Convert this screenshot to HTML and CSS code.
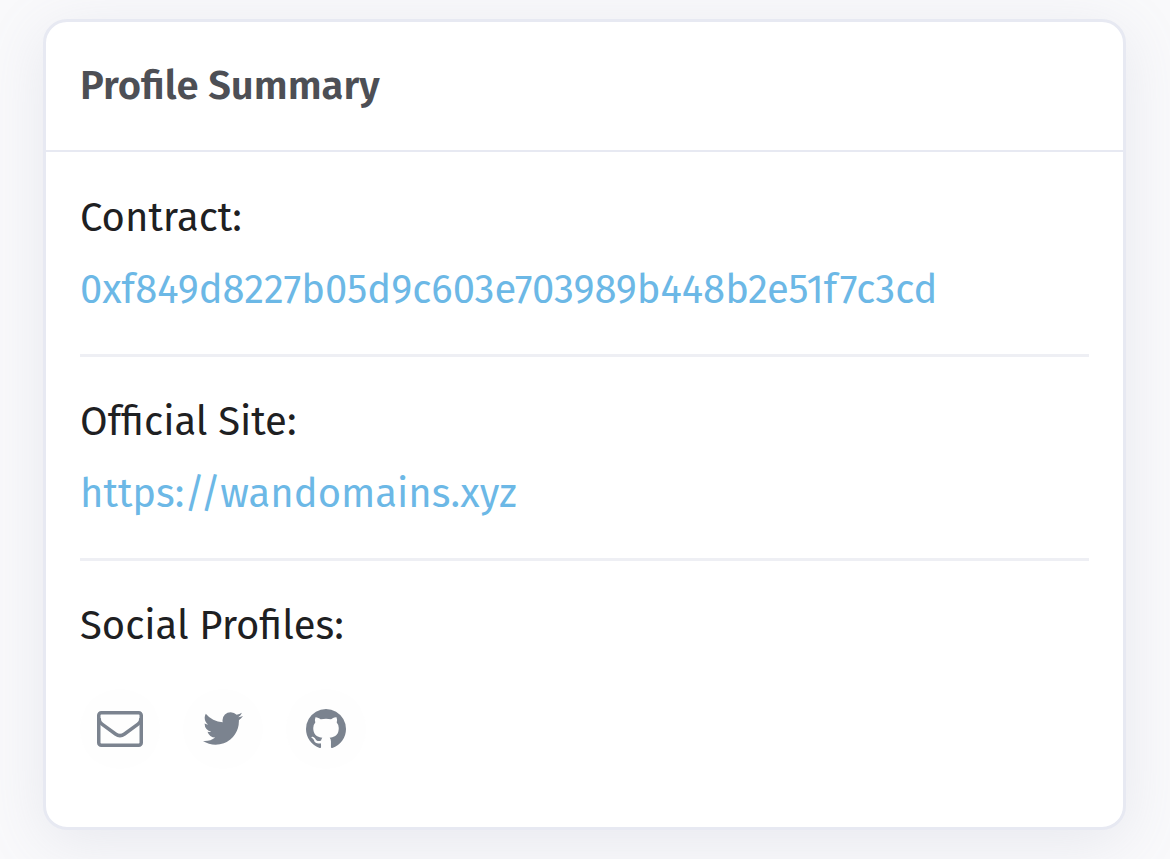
FILE: index.html
```
<!DOCTYPE html>
<html lang="en">
<head>
    <meta charset="UTF-8">
    <meta name="viewport" content="width=device-width, initial-scale=1.0">
    <title>Profile Summary</title>
    <link rel="stylesheet" href="styles.css">
</head>
<body>

<section class="card">
    <header class="card-header">
        <h1>Profile Summary</h1>
    </header>

    <div class="card-body">
        <div class="item">
            <h2>Contract:</h2>
            <a href="#contract">0xf849d8227b05d9c603e703989b448b2e51f7c3cd</a>
        </div>

        <div class="item">
            <h2>Official Site:</h2>
            <a href="https://wandomains.xyz">https://wandomains.xyz</a>
        </div>

        <div class="item">
            <h2>Social Profiles:</h2>
            <div class="social">
                <a class="social-link" href="#email" aria-label="Email">
                    <svg width="46" height="36" viewBox="0 0 46 36" fill="none" stroke="currentColor" stroke-width="3.5">
                        <rect x="1.75" y="1.75" width="42.5" height="32.5" rx="2.5"/>
                        <path d="M2 7Q2 11 5 13.2L18.5 23Q23 26.2 27.5 23L41 13.2Q44 11 44 7"/>
                    </svg>
                </a>
                <a class="social-link" href="#twitter" aria-label="Twitter">
                    <svg width="40" height="40" viewBox="44 132 1576 1576" fill="currentColor">
                        <path d="M1620 408q-67 98-162 167 1 14 1 42 0 130-38 259.5t-115.5 248.5-184.5 210.5-258 146-323 54.5q-271 0-496-145 35 4 78 4 225 0 401-138-105-2-188-64.5t-114-159.5q33 5 61 5 43 0 85-11-112-23-185.5-111.5t-73.5-205.5v-4q68 38 146 41-66-44-105-115t-39-154q0-88 44-163 121 149 294.5 238.5t371.5 99.5q-8-38-8-74 0-134 94.5-228.5t228.5-94.5q140 0 236 102 109-21 205-78-37 115-142 178 93-10 186-50z"/>
                    </svg>
                </a>
                <a class="social-link" href="#github" aria-label="GitHub">
                    <svg width="40" height="40" viewBox="128 128 1536 1536" fill="currentColor">
                        <path d="M896 128q209 0 385.500 103t279.500 279.500 103 385.500q0 251-146.500 451.500t-378.500 277.500q-27 5-40-7t-13-30q0-3 .5-76.500t.5-134.500q0-97-52-142 57-6 102.500-18t94-39 81-66.500 53-105 20.500-150.500q0-119-79-206 37-91-8-204-28-9-81 11t-92 44l-38 24q-93-26-192-26t-192 26q-16-11-42.500-27t-83.500-38.500-85-13.500q-45 113-8 204-79 87-79 206 0 85 20.500 150t52.500 105 80.500 67 94 39 102.500 18q-39 36-49 103-21 10-45 15t-57 5-65.500-21.500-55.500-62.500q-19-32-48.500-52t-49.500-24l-20-3q-21 0-29 4.500t-5 11.500 9 14 13 12l7 5q22 10 43.500 38t31.500 51l10 23q13 38 44 61.500t67 30 69.500 7 55.500-3.500l23-4q0 38 .5 88.500t.5 54.500q0 18-13 30t-40 7q-232-77-378.500-277.500t-146.500-451.500q0-209 103-385.500t279.500-279.500 385.500-103z"/>
                    </svg>
                </a>
            </div>
        </div>
    </div>
</section>

</body>
</html>
```
FILE: styles.css
```
* {
    box-sizing: border-box;
}

body {
    font-family: 'Fira Sans', 'Noto Sans', sans-serif;
    font-size: 40px;
    line-height: 60px;
    background-color: #f9f9fb;
    margin: 0;
    padding: 19px 44px 30px 43px;
    color: #1e2022;
}

a {
    color: #6cb8e6;
    text-decoration: none;
}

a:hover {
    text-decoration: underline;
}

/* Card */
.card {
    background-color: #fff;
    border: 3px solid #e7e9f2;
    border-radius: 24px;
    box-shadow: 0 12px 60px rgba(140, 152, 174, 0.16);
}

.card-header {
    padding: 34px;
    border-bottom: 2px solid #e7e9f2;
}

.card-header h1 {
    margin: 0;
    font-size: 40px;
    font-weight: 600;
    color: #4d4f55;
}

.card-body {
    padding: 0 34px 24px;
}

/* Rows inside the card */
.item {
    display: flex;
    flex-direction: column;
    align-items: flex-start;
    gap: 12px;
    padding: 35px 0 34px;
    border-bottom: 3px solid #eeeff4;
}

.item:first-child {
    padding-top: 36px;
}

.item:last-child {
    border-bottom: 0;
}

.item h2 {
    margin: 0;
    font-size: 40px;
    font-weight: 400;
}

.item a {
    max-width: 100%;
    overflow-wrap: anywhere;
}

/* Social icons */
.social {
    display: flex;
    gap: 23px;
    padding-top: 21px;
}

.social .social-link {
    display: flex;
    align-items: center;
    justify-content: center;
    width: 80px;
    height: 80px;
    border-radius: 50%;
    background-color: #fefefe;
    color: #7b838f;
}
```
